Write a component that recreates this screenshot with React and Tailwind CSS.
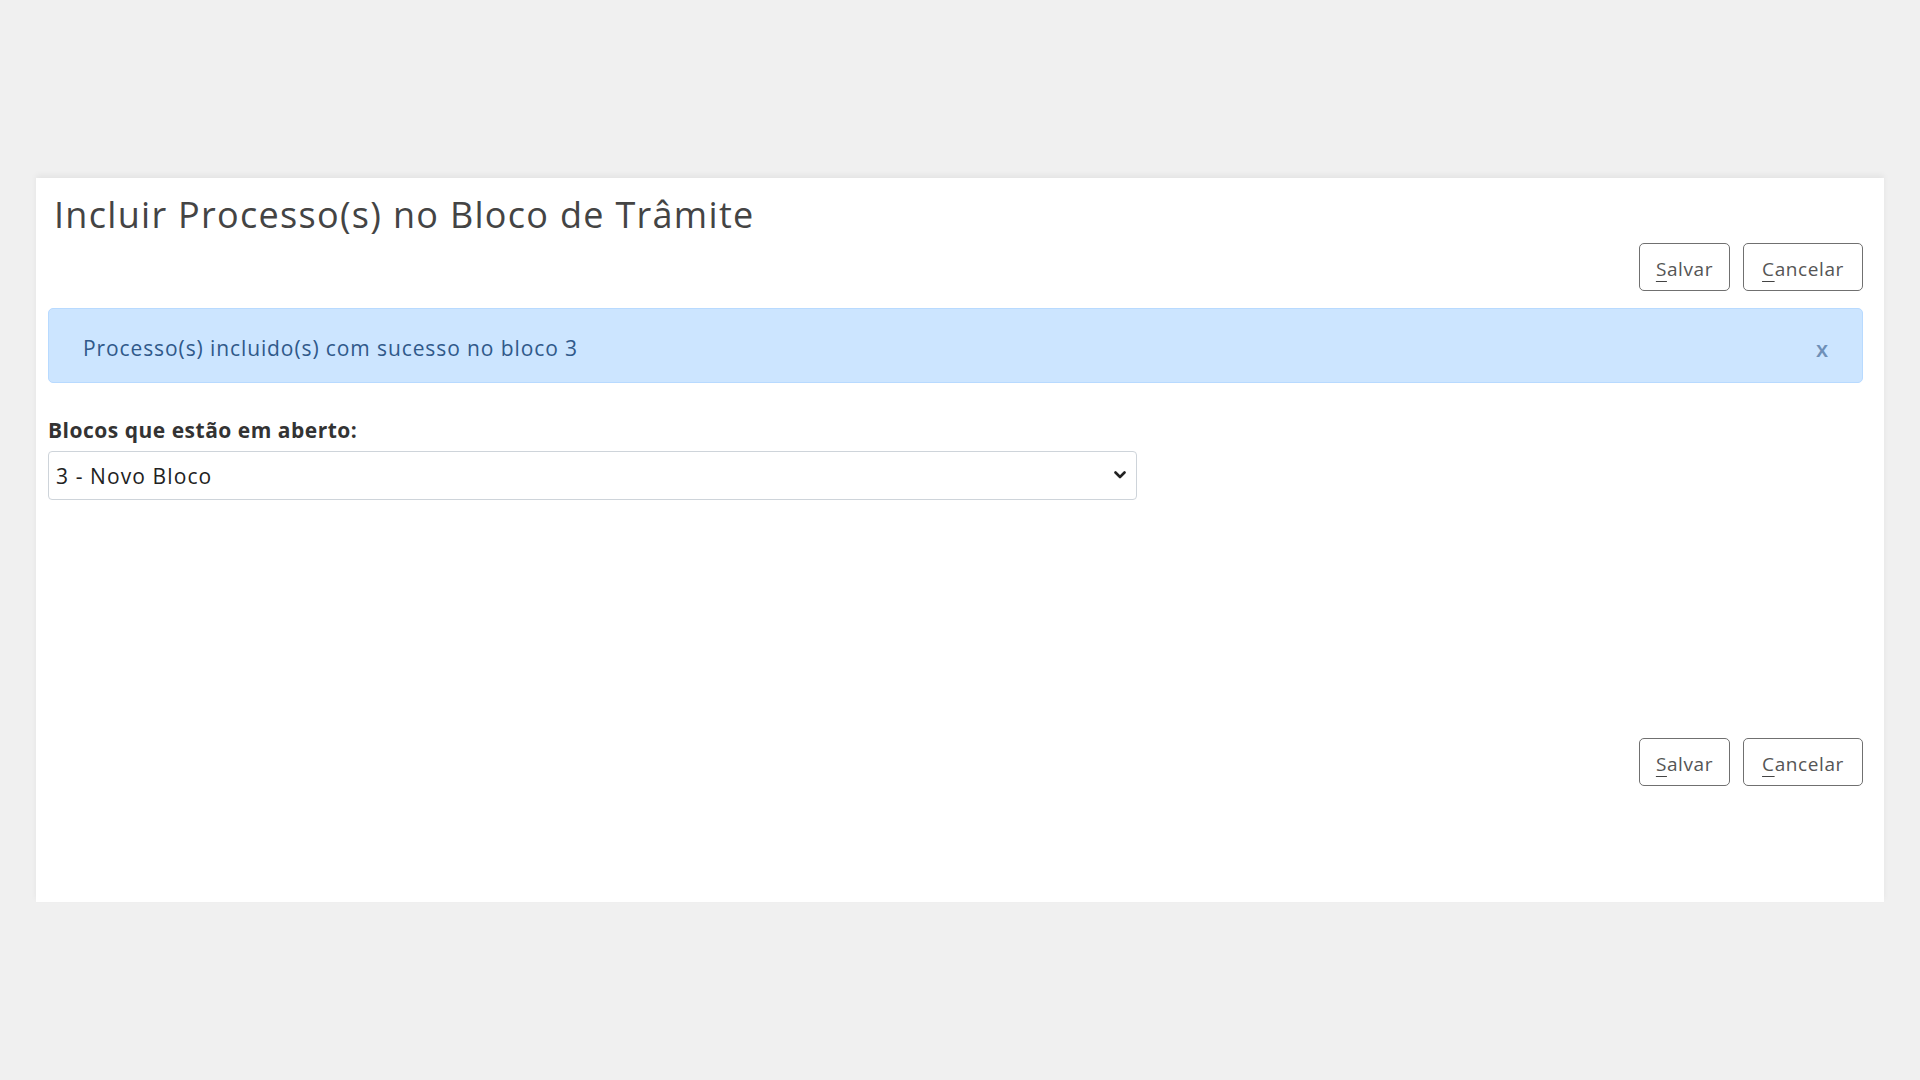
import React from 'react'

const font = { fontFamily: '"Open Sans", Lato, sans-serif' }

const ActionButton = ({ accessKey, rest }) => (
  <button className="w-full h-[48px] px-[10px] pt-[4px] border border-[#707070] rounded-[5px] bg-white text-[#555] text-[19px] tracking-[0.6px] leading-none">
    <span className="underline underline-offset-[5px] decoration-[#444]">{accessKey}</span>
    {rest}
  </button>
)

const ButtonBar = () => (
  <div className="flex justify-end gap-[13px]">
    <div className="w-[91px] flex">
      <ActionButton accessKey="S" rest="alvar" />
    </div>
    <div className="w-[120px] flex">
      <ActionButton accessKey="C" rest="ancelar" />
    </div>
  </div>
)

export default function App() {
  return (
    <div className="min-h-[1080px] bg-[#f0f0f0] pt-[178px] px-[36px]" style={font}>
      <div className="bg-white h-[724px] pl-[12px] pr-[21px] shadow-[0_-3px_6px_rgba(0,0,0,0.05)]">
        <h1 className="pl-[6px] pt-[14px] text-[36px] tracking-[1.3px] leading-[46px] text-[#444] font-normal">
          Incluir Processo(s) no Bloco de Trâmite
        </h1>
        <div className="mt-[5px]">
          <ButtonBar />
        </div>
        <div className="mt-[17px] h-[75px] pt-[6px] bg-[#cce5ff] border border-[#b8daff] rounded-[5px] flex items-center justify-between pl-[34px] pr-[34px]">
          <span className="text-[#30598a] text-[21px] tracking-[0.9px]">Processo(s) incluido(s) com sucesso no bloco 3</span>
          <span className="text-[#6f90b8] text-[22px] font-semibold">x</span>
        </div>
        <div className="mt-[35px]">
          <label className="block text-[21px] tracking-[0.5px] font-bold text-[#333] leading-[24px]">Blocos que estão em aberto:</label>
          <div className="relative mt-[9px] w-[1089px]">
            <select className="appearance-none w-full h-[49px] border border-[#ced4da] rounded-[4px] bg-white pl-[7px] pr-[30px] pt-[3px] text-[21px] tracking-[1.1px] text-[#222]">
              <option>3 - Novo Bloco</option>
            </select>
            <svg className="absolute right-[11px] top-[20px] pointer-events-none" width="12" height="9" viewBox="0 0 12 9">
              <path d="M1.5 1.5 L6 6 L10.5 1.5" fill="none" stroke="#222" strokeWidth="2.6" strokeLinecap="round" strokeLinejoin="round" />
            </svg>
          </div>
        </div>
        <div className="mt-[238px]">
          <ButtonBar />
        </div>
      </div>
    </div>
  )
}
